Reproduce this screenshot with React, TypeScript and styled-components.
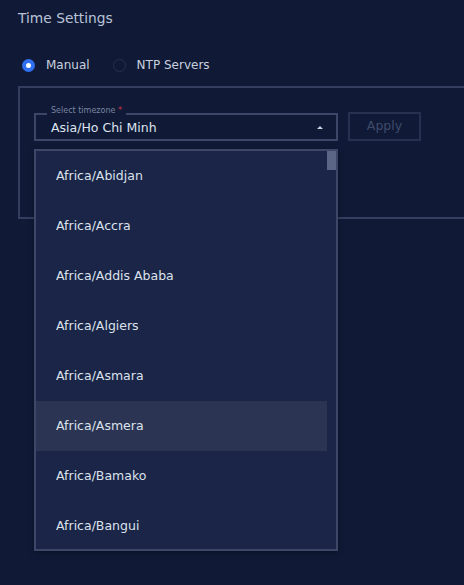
import React from "react";
import styled, { createGlobalStyle } from "styled-components";

const Global = createGlobalStyle`
  html, body { margin: 0; padding: 0; background: #101a37; }
  body { font-family: "DejaVu Sans", "Liberation Sans", sans-serif; overflow: hidden; }
  * { box-sizing: border-box; }
`;

const Page = styled.div`
  width: 464px;
  height: 585px;
  background: #101a37;
  padding: 10px 0 0 18px;
  overflow: hidden;
  position: relative;
`;

const Title = styled.div`
  font-size: 13.8px;
  line-height: 16px;
  color: #b9c3d8;
`;

const RadioRow = styled.div`
  display: flex;
  align-items: center;
  margin-top: 31px;
  height: 16px;
  padding-left: 4px;
`;

const RadioItem = styled.label`
  display: flex;
  align-items: center;
  gap: 11px;
  font-size: 12px;
  color: #c9d0de;
  margin-right: 23px;
`;

const RadioDot = styled.span<{ $checked?: boolean }>`
  width: 13px;
  height: 13px;
  border-radius: 50%;
  display: inline-flex;
  align-items: center;
  justify-content: center;
  background: ${(p) => (p.$checked ? "#2f6ff0" : "transparent")};
  border: ${(p) => (p.$checked ? "none" : "1.5px solid #27304d")};
  &::after {
    content: "";
    width: 5px;
    height: 5px;
    border-radius: 50%;
    background: #fff;
    display: ${(p) => (p.$checked ? "block" : "none")};
  }
`;

const Box = styled.div`
  margin-top: 13px;
  width: 480px;
  height: 133px;
  border: 2px solid #343f60;
  padding: 24px 0 0 14px;
`;

const FieldRow = styled.div`
  display: flex;
  align-items: flex-start;
  gap: 10px;
`;

const SelectWrap = styled.div`
  position: relative;
  width: 304px;
  margin-top: 1px;
`;

const SelectBox = styled.div`
  height: 28px;
  border: 2px solid #3c4767;
  display: flex;
  align-items: center;
  justify-content: space-between;
  padding: 0 13px 0 15px;
  font-size: 12.5px;
  color: #dfe4ee;
`;

const FloatLabel = styled.span`
  position: absolute;
  left: 13px;
  top: -7px;
  padding: 0 4px;
  background: #101a37;
  font-size: 8px;
  line-height: 10px;
  color: #7a84a0;
`;

const Req = styled.span`
  color: #d2334a;
`;

const Caret = styled.span`
  width: 0;
  height: 0;
  border-left: 3px solid transparent;
  border-right: 3px solid transparent;
  border-bottom: 3px solid #c9d0de;
`;

const ApplyBtn = styled.button`
  width: 73px;
  height: 29px;
  background: transparent;
  border: 2px solid #27304f;
  color: #3f4a6a;
  font-family: inherit;
  font-size: 12.5px;
  padding: 0 0 2px;
`;

const Menu = styled.div`
  position: absolute;
  top: 36px;
  left: 0;
  width: 304px;
  height: 402px;
  background: #1a2547;
  border: 2px solid #3d4869;
  box-shadow: 0 2px 6px rgba(0, 0, 0, 0.3);
  display: flex;
  overflow: hidden;
  z-index: 5;
`;

const List = styled.div`
  flex: 1;
  display: flex;
  flex-direction: column;
`;

const Item = styled.div<{ $hover?: boolean }>`
  height: 50px;
  flex-shrink: 0;
  display: flex;
  align-items: center;
  padding: 0 0 1px 20px;
  font-size: 12.5px;
  color: #dce2ec;
  background: ${(p) => (p.$hover ? "#2b3553" : "transparent")};
`;

const ScrollTrack = styled.div`
  width: 9px;
  display: flex;
  flex-direction: column;
`;

const Thumb = styled.div`
  width: 9px;
  height: 19px;
  background: #5b6585;
`;

const zones = [
  "Africa/Abidjan",
  "Africa/Accra",
  "Africa/Addis Ababa",
  "Africa/Algiers",
  "Africa/Asmara",
  "Africa/Asmera",
  "Africa/Bamako",
  "Africa/Bangui",
];

export default function App() {
  return (
    <>
      <Global />
      <Page>
        <Title>Time Settings</Title>
        <RadioRow>
          <RadioItem>
            <RadioDot $checked />
            Manual
          </RadioItem>
          <RadioItem>
            <RadioDot />
            NTP Servers
          </RadioItem>
        </RadioRow>
        <Box>
          <FieldRow>
            <SelectWrap>
              <FloatLabel>
                Select timezone <Req>*</Req>
              </FloatLabel>
              <SelectBox>
                <span>Asia/Ho Chi Minh</span>
                <Caret />
              </SelectBox>
              <Menu>
                <List>
                  {zones.map((z) => (
                    <Item key={z} $hover={z === "Africa/Asmera"}>
                      {z}
                    </Item>
                  ))}
                </List>
                <ScrollTrack>
                  <Thumb />
                </ScrollTrack>
              </Menu>
            </SelectWrap>
            <ApplyBtn>Apply</ApplyBtn>
          </FieldRow>
        </Box>
      </Page>
    </>
  );
}
